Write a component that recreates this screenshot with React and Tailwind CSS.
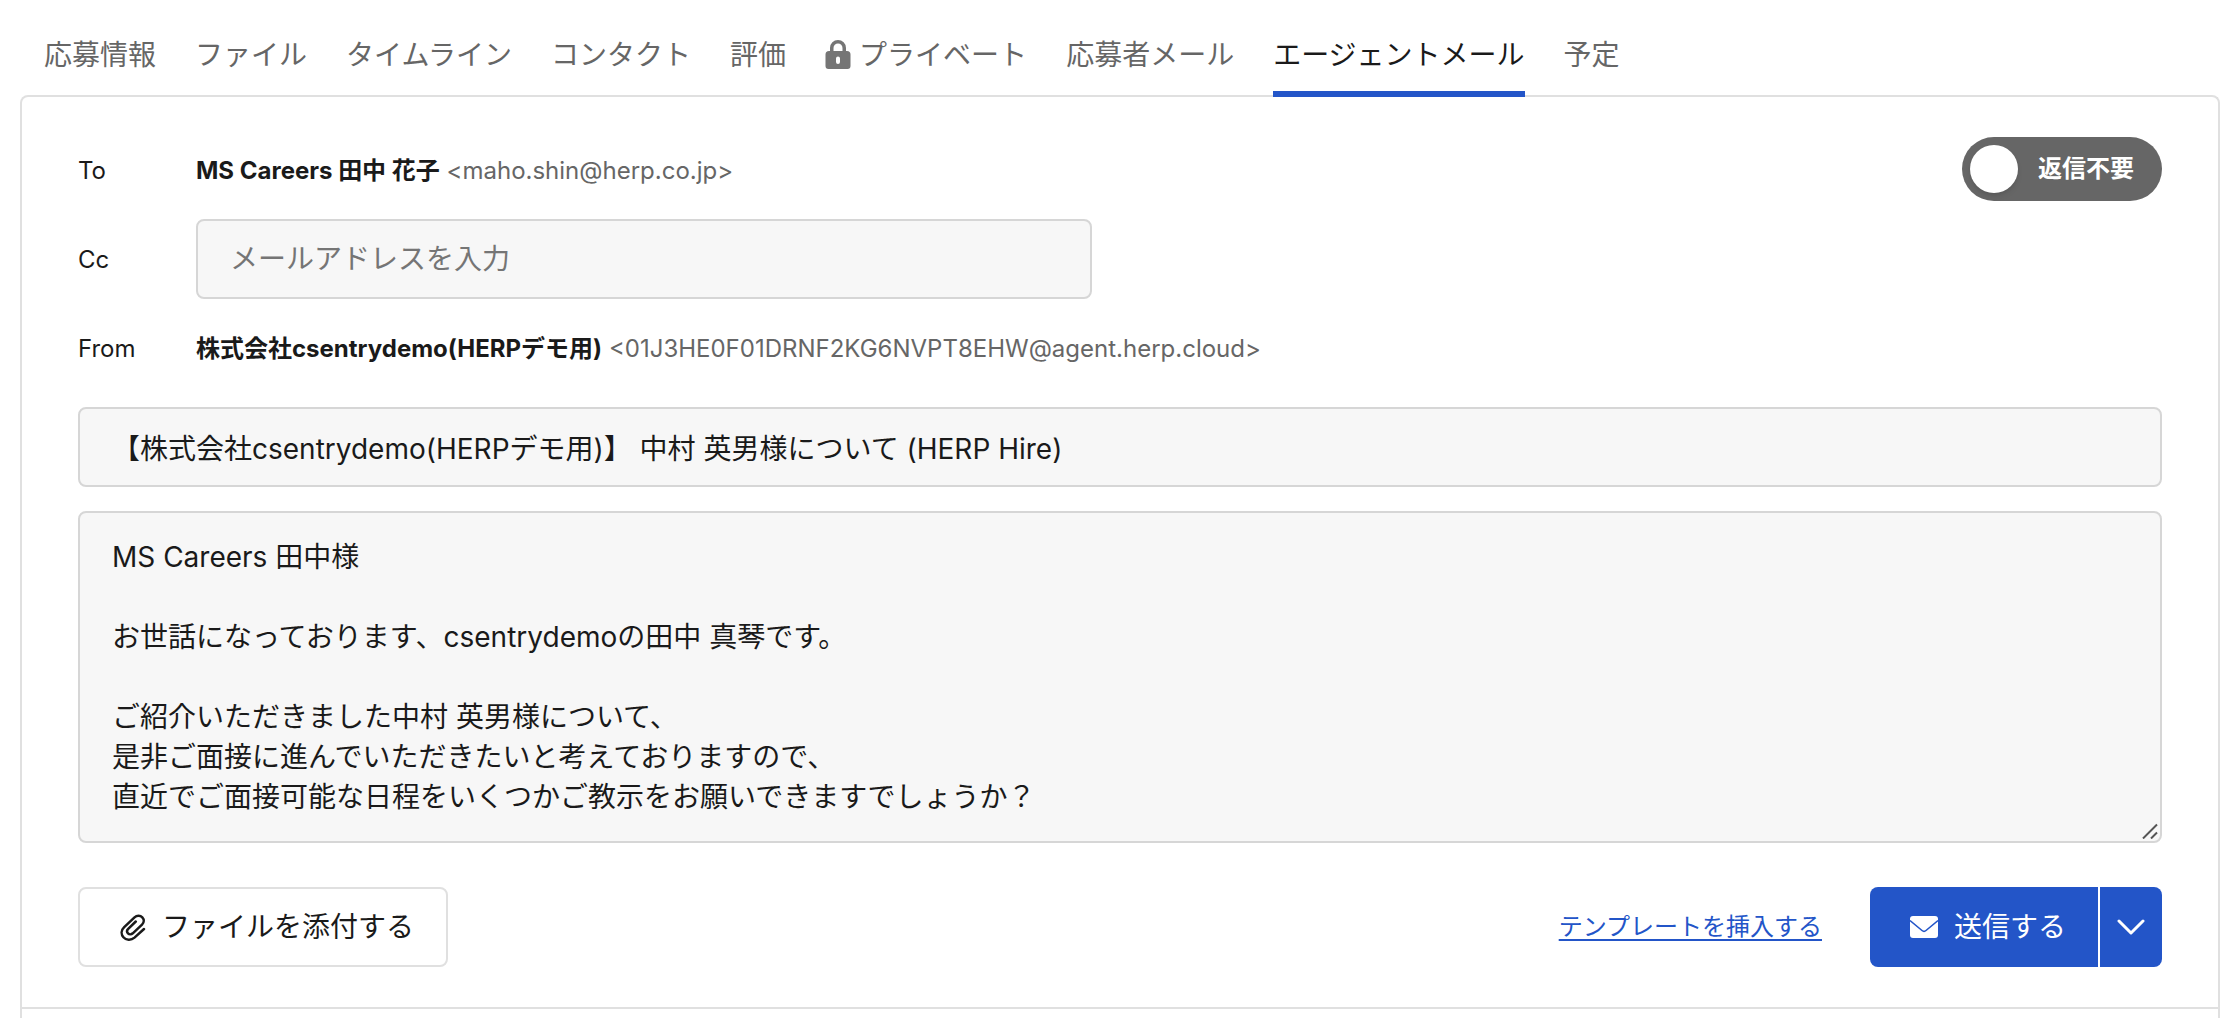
import React, { useState } from "react";

const TABS = [
  "応募情報",
  "ファイル",
  "タイムライン",
  "コンタクト",
  "評価",
  "プライベート",
  "応募者メール",
  "エージェントメール",
  "予定",
];

const DEFAULT_BODY = `MS Careers 田中様

お世話になっております、csentrydemoの田中 真琴です。

ご紹介いただきました中村 英男様について、
是非ご面接に進んでいただきたいと考えておりますので、
直近でご面接可能な日程をいくつかご教示をお願いできますでしょうか？`;

const LockIcon = () => (
  <svg viewBox="0 0 26 30" className="w-[26px] h-[30px] fill-[#757575]" aria-hidden="true">
    <path
      fillRule="evenodd"
      d="M5 11V8a8 8 0 0 1 16 0v3h1a3.500 3.500 0 0 1 3.500 3.500V26a3 3 0 0 1-3 3h-19a3 3 0 0 1-3-3V14.500A3.500 3.500 0 0 1 4 11zM8.500 11h9V8a4.500 4.500 0 0 0-9 0zM13 16.500a2 2 0 0 0-2 2v3.500a2 2 0 0 0 4 0v-3.500a2 2 0 0 0-2-2z"
    />
  </svg>
);

const ClipIcon = () => (
  <svg
    viewBox="0 0 26 28"
    className="w-[26px] h-[28px]"
    fill="none"
    stroke="currentColor"
    strokeWidth="2.5"
    strokeLinecap="round"
    aria-hidden="true"
  >
    <path d="M24 16 14.500 24.600C11 27.600 6 27.200 3.400 24.200S1.200 17 4.200 14.200L14.500 4.300c2.400-2.200 5.800-2.200 7.800 0s1.900 5.200-.3 7.400L12.800 20.300c-1.500 1.300-3.600 1.300-4.800 0s-1.100-3.200.2-4.500L15.800 8.500" />
  </svg>
);

const MailIcon = () => (
  <svg viewBox="0 0 28 22" className="w-7 h-[22px]" aria-hidden="true">
    <rect width="28" height="22" rx="3" fill="currentColor" />
    <path d="M0 4.500 12 14.500a3 3 0 0 0 4 0L28 4.500" fill="none" stroke="#2355c8" strokeWidth="1.600" />
  </svg>
);

const ChevronIcon = () => (
  <svg
    viewBox="0 0 28 16"
    className="w-7 h-4"
    fill="none"
    stroke="currentColor"
    strokeWidth="3"
    strokeLinecap="round"
    strokeLinejoin="round"
    aria-hidden="true"
  >
    <path d="M2 2 14 14 26 2" />
  </svg>
);

const ResizeGrip = () => (
  <svg
    viewBox="0 0 16 16"
    className="pointer-events-none absolute right-1 bottom-1 size-4"
    fill="none"
    stroke="#555"
    strokeWidth="2"
    aria-hidden="true"
  >
    <path d="M1 15.500 15 1.500M9 15.500 15 9.500" />
  </svg>
);

const App = () => {
  const [activeTab, setActiveTab] = useState("エージェントメール");
  const [noReply, setNoReply] = useState(false);
  const [cc, setCc] = useState("");
  const [subject, setSubject] = useState(
    "【株式会社csentrydemo(HERPデモ用)】 中村 英男様について (HERP Hire)"
  );
  const [body, setBody] = useState(DEFAULT_BODY);

  return (
    <div className="min-h-screen flex flex-col bg-white px-5 text-[#1a1a1a] font-['Inter','Noto_Sans_CJK_JP',sans-serif]">
      {/* Tabs */}
      <nav className="relative z-10 flex gap-[39px] px-6 pt-5">
        {TABS.map((tab) => (
          <button
            key={tab}
            type="button"
            onClick={() => setActiveTab(tab)}
            className={`flex h-[77px] items-center gap-2 border-b-6 pb-0.5 text-[28px] leading-10 whitespace-nowrap ${
              activeTab === tab ? "border-[#2355c8] text-[#1a1a1a]" : "border-transparent text-[#666]"
            }`}
          >
            {tab === "プライベート" && <LockIcon />}
            {tab}
          </button>
        ))}
      </nav>

      {/* Mail panel */}
      <main className="-mt-0.5 flex grow flex-col rounded-t-lg border-2 border-b-0 border-[#e0e0e0]">
        <form className="border-b-2 border-[#e0e0e0] px-14 py-10" onSubmit={(e) => e.preventDefault()}>
          <div className="flex items-start justify-between">
            <div className="grid grid-cols-[118px_1fr] items-center text-2xl">
              <span>To</span>
              <p className="leading-[68px]">
                <b className="font-bold">MS Careers 田中 花子</b>{" "}
                <span className="text-[#666]">&lt;maho.shin@herp.co.jp&gt;</span>
              </p>

              <label htmlFor="cc">Cc</label>
              <input
                id="cc"
                value={cc}
                onChange={(e) => setCc(e.target.value)}
                placeholder="メールアドレスを入力"
                className="mt-3.5 mb-4 h-20 w-[896px] rounded-lg border-2 border-[#d6d6d6] bg-[#f7f7f7] px-8 text-[28px] placeholder:text-[#757575]"
              />

              <span>From</span>
              <p className="leading-[68px]">
                <b className="font-bold">株式会社csentrydemo(HERPデモ用)</b>{" "}
                <span className="text-[#666]">&lt;01J3HE0F01DRNF2KG6NVPT8EHW@agent.herp.cloud&gt;</span>
              </p>
            </div>

            <button
              type="button"
              role="switch"
              aria-checked={noReply}
              onClick={() => setNoReply(!noReply)}
              className="flex h-16 w-[200px] items-center gap-5 rounded-full bg-[#666] px-2 text-2xl font-bold text-white"
            >
              <span className="size-12 rounded-full bg-white shadow-md"></span>
              返信不要
            </button>
          </div>

          <input
            aria-label="件名"
            value={subject}
            onChange={(e) => setSubject(e.target.value)}
            className="mt-6 block h-20 w-full rounded-lg border-2 border-[#d6d6d6] bg-[#f7f7f7] px-8 text-[28px]"
          />

          <div className="relative mt-6">
            <textarea
              aria-label="本文"
              rows={7}
              value={body}
              onChange={(e) => setBody(e.target.value)}
              className="block w-full resize-y rounded-lg border-2 border-[#d6d6d6] bg-[#f7f7f7] px-8 py-6 text-[28px] leading-10 [&::-webkit-resizer]:bg-transparent"
            />
            <ResizeGrip />
          </div>

          <div className="mt-11 flex items-center justify-between">
            <button
              type="button"
              className="flex h-20 items-center gap-4 rounded-lg border-2 border-[#e0e0e0] pr-8 pl-10 text-[28px]"
            >
              <ClipIcon />
              ファイルを添付する
            </button>

            <div className="flex items-center gap-12">
              <a href="#template" className="text-2xl text-[#2355c8] underline underline-offset-4">
                テンプレートを挿入する
              </a>
              <div className="flex h-20 gap-0.5 text-white">
                <button
                  type="submit"
                  className="flex items-center gap-4 rounded-l-lg bg-[#2355c8] pr-8 pl-10 text-[28px]"
                >
                  <MailIcon />
                  送信する
                </button>
                <button
                  type="button"
                  aria-label="送信オプション"
                  className="flex w-[62px] items-center justify-center rounded-r-lg bg-[#2355c8]"
                >
                  <ChevronIcon />
                </button>
              </div>
            </div>
          </div>
        </form>
      </main>
    </div>
  );
};

export default App;
